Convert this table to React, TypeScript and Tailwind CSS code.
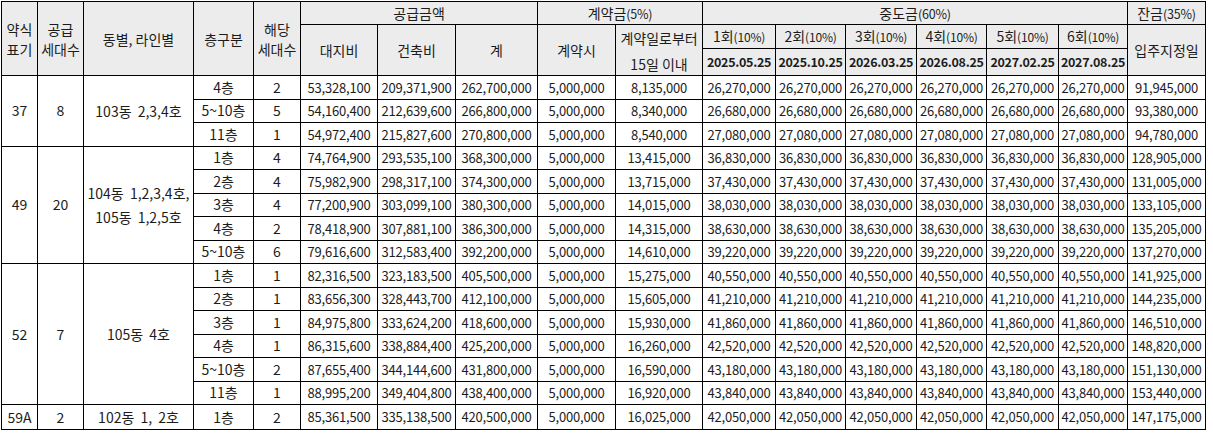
import React from 'react'

type Row = {
  floor: string
  units: string
  land: string
  build: string
  total: string
  deposit: string
  within15: string
  mid: string
  balance: string
}

type Group = {
  type: string
  supply: string
  lines: string[]
  rows: Row[]
}

const r = (
  floor: string,
  units: string,
  land: string,
  build: string,
  total: string,
  within15: string,
  mid: string,
  balance: string
): Row => ({ floor, units, land, build, total, deposit: '5,000,000', within15, mid, balance })

const groups: Group[] = [
  {
    type: '37',
    supply: '8',
    lines: ['103동 2,3,4호'],
    rows: [
      r('4층', '2', '53,328,100', '209,371,900', '262,700,000', '8,135,000', '26,270,000', '91,945,000'),
      r('5~10층', '5', '54,160,400', '212,639,600', '266,800,000', '8,340,000', '26,680,000', '93,380,000'),
      r('11층', '1', '54,972,400', '215,827,600', '270,800,000', '8,540,000', '27,080,000', '94,780,000'),
    ],
  },
  {
    type: '49',
    supply: '20',
    lines: ['104동 1,2,3,4호,', '105동 1,2,5호'],
    rows: [
      r('1층', '4', '74,764,900', '293,535,100', '368,300,000', '13,415,000', '36,830,000', '128,905,000'),
      r('2층', '4', '75,982,900', '298,317,100', '374,300,000', '13,715,000', '37,430,000', '131,005,000'),
      r('3층', '4', '77,200,900', '303,099,100', '380,300,000', '14,015,000', '38,030,000', '133,105,000'),
      r('4층', '2', '78,418,900', '307,881,100', '386,300,000', '14,315,000', '38,630,000', '135,205,000'),
      r('5~10층', '6', '79,616,600', '312,583,400', '392,200,000', '14,610,000', '39,220,000', '137,270,000'),
    ],
  },
  {
    type: '52',
    supply: '7',
    lines: ['105동 4호'],
    rows: [
      r('1층', '1', '82,316,500', '323,183,500', '405,500,000', '15,275,000', '40,550,000', '141,925,000'),
      r('2층', '1', '83,656,300', '328,443,700', '412,100,000', '15,605,000', '41,210,000', '144,235,000'),
      r('3층', '1', '84,975,800', '333,624,200', '418,600,000', '15,930,000', '41,860,000', '146,510,000'),
      r('4층', '1', '86,315,600', '338,884,400', '425,200,000', '16,260,000', '42,520,000', '148,820,000'),
      r('5~10층', '2', '87,655,400', '344,144,600', '431,800,000', '16,590,000', '43,180,000', '151,130,000'),
      r('11층', '1', '88,995,200', '349,404,800', '438,400,000', '16,920,000', '43,840,000', '153,440,000'),
    ],
  },
  {
    type: '59A',
    supply: '2',
    lines: ['102동 1, 2호'],
    rows: [
      r('1층', '2', '85,361,500', '335,138,500', '420,500,000', '16,025,000', '42,050,000', '147,175,000'),
    ],
  },
]

const rounds = [
  ['1회', '2025.05.25'],
  ['2회', '2025.10.25'],
  ['3회', '2026.03.25'],
  ['4회', '2026.08.25'],
  ['5회', '2027.02.25'],
  ['6회', '2027.08.25'],
]

const th = 'border border-black bg-[#ececec] font-normal text-center align-middle p-0 leading-[20px]'
const td = 'border border-black text-center align-middle p-0 whitespace-nowrap'
const num = `${td} text-[13px] tracking-[-0.2px]`

export default function App() {
  return (
    <div
      className="bg-white w-[1213px] h-[434px] pl-[1px] pt-[1px] text-[#1c1c1c] text-[14px]"
      style={{ fontFamily: '"Noto Sans CJK KR", "Noto Sans", sans-serif' }}
    >
      <table className="table-fixed border-collapse w-[1204px]">
        <colgroup>
          <col className="w-[36px]" />
          <col className="w-[46px]" />
          <col className="w-[110px]" />
          <col className="w-[60px]" />
          <col className="w-[47px]" />
          <col className="w-[77px]" />
          <col className="w-[78px]" />
          <col className="w-[82px]" />
          <col className="w-[78px]" />
          <col className="w-[87px]" />
          <col className="w-[73px]" />
          <col className="w-[70px]" />
          <col className="w-[71px]" />
          <col className="w-[70px]" />
          <col className="w-[72px]" />
          <col className="w-[69px]" />
          <col className="w-[78px]" />
        </colgroup>
        <thead>
          <tr className="h-[23px]">
            <th rowSpan={3} className={th}>
              약식
              <br />
              표기
            </th>
            <th rowSpan={3} className={th}>
              공급
              <br />
              세대수
            </th>
            <th rowSpan={3} className={th}>
              동별, 라인별
            </th>
            <th rowSpan={3} className={th}>
              층구분
            </th>
            <th rowSpan={3} className={th}>
              해당
              <br />
              세대수
            </th>
            <th colSpan={3} className={th}>
              공급금액
            </th>
            <th colSpan={2} className={th}>
              계약금<span className="text-[12.5px] tracking-[-0.2px]">(5%)</span>
            </th>
            <th colSpan={6} className={th}>
              중도금<span className="text-[12.5px] tracking-[-0.2px]">(60%)</span>
            </th>
            <th className={th}>
              잔금<span className="text-[12.5px] tracking-[-0.2px]">(35%)</span>
            </th>
          </tr>
          <tr className="h-[24px]">
            <th rowSpan={2} className={th}>
              대지비
            </th>
            <th rowSpan={2} className={th}>
              건축비
            </th>
            <th rowSpan={2} className={th}>
              계
            </th>
            <th rowSpan={2} className={th}>
              계약시
            </th>
            <th rowSpan={2} className={th}>
              <div className="flex flex-col gap-[6px] pt-[2px]">
                <span>계약일로부터</span>
                <span>15일 이내</span>
              </div>
            </th>
            {rounds.map(([label]) => (
              <th key={label} className={th}>
                {label}
                <span className="text-[12px] tracking-[-0.2px]">(10%)</span>
              </th>
            ))}
            <th rowSpan={2} className={th}>
              입주지정일
            </th>
          </tr>
          <tr className="h-[27px]">
            {rounds.map(([label, date]) => (
              <th key={label} className={`${th} font-semibold text-[12.5px] tracking-[-0.3px]`}>
                {date}
              </th>
            ))}
          </tr>
        </thead>
        <tbody>
          {groups.map((g) =>
            g.rows.map((row, i) => (
              <tr key={g.type + i} className="h-[23.5px]">
                {i === 0 && (
                  <>
                    <td rowSpan={g.rows.length} className={td}>
                      {g.type}
                    </td>
                    <td rowSpan={g.rows.length} className={td}>
                      {g.supply}
                    </td>
                    <td rowSpan={g.rows.length} className={`${td} leading-[24px] [word-spacing:3px]`}>
                      {g.lines.map((l) => (
                        <div key={l}>{l}</div>
                      ))}
                    </td>
                  </>
                )}
                <td className={td}>{row.floor}</td>
                <td className={td}>{row.units}</td>
                <td className={num}>{row.land}</td>
                <td className={num}>{row.build}</td>
                <td className={num}>{row.total}</td>
                <td className={num}>{row.deposit}</td>
                <td className={num}>{row.within15}</td>
                {rounds.map(([label]) => (
                  <td key={label} className={num}>
                    {row.mid}
                  </td>
                ))}
                <td className={num}>{row.balance}</td>
              </tr>
            ))
          )}
        </tbody>
      </table>
    </div>
  )
}
